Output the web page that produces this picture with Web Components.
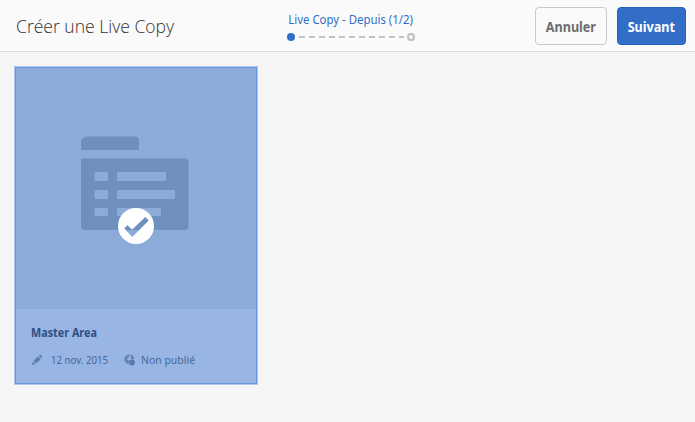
<!DOCTYPE html>
<html lang="fr">
<head>
<meta charset="utf-8">
<title>Créer une Live Copy</title>
<style>
html, body { margin: 0; height: 100%; overflow: hidden; }
body { background: #f5f5f5; font-family: "Open Sans", "Noto Sans", sans-serif; }
</style>
</head>
<body>
<wizard-page></wizard-page>
<script>
const define = (name, html) => customElements.define(name, class extends HTMLElement {
  constructor() {
    super();
    this.attachShadow({ mode: 'open' }).innerHTML = html;
  }
});

define('fit-text', `<style>
:host { display: block; width: max-content; white-space: nowrap; transform: scaleX(var(--stretch, 1)); transform-origin: var(--origin, 0) 50%; }
</style><slot></slot>`);

define('wizard-button', `<style>
:host { display: block; }
button { box-sizing: border-box; display: flex; justify-content: center; width: 100%; height: 38px; padding: 0; border: 1px solid var(--edge, #c9c9c9); border-radius: 4px;
  background: var(--fill, #fafafa); color: var(--ink, #6d6d6d); font: 700 14px/37px "Noto Sans", sans-serif; }
fit-text { --stretch: .9; --origin: 50%; }
</style><button><fit-text><slot></slot></fit-text></button>`);

define('wizard-steps', `<style>
:host { display: flex; flex-direction: column; align-items: center; color: #326ec8; font: 12px/16px "Noto Sans", sans-serif; }
fit-text { --stretch: .95; --origin: 50%; }
svg { display: block; margin-top: 4px; }
</style><fit-text><slot></slot></fit-text>
<svg width="128" height="10" viewBox="0 0 128 10">
<path d="M12 5H117" stroke="#c2c2c2" stroke-width="2" stroke-dasharray="6 4"/>
<circle cx="4" cy="5" r="4" fill="#326ec8"/>
<circle cx="124" cy="5" r="3" fill="#fafafa" stroke="#bebebe" stroke-width="2"/>
</svg>`);

define('wizard-bar', `<style>
:host { box-sizing: border-box; display: grid; grid-template-columns: 287px 128px 1fr; height: 52px; background: #fafafa; border-bottom: 1px solid #dadada; }
h1 { margin: 0; padding-left: 15.500px; font: 300 19px/53px "Open Sans", sans-serif; color: #323232; }
h1 fit-text { --stretch: .923; }
wizard-steps { padding-top: 12px; }
.actions { display: flex; justify-content: flex-end; gap: 10px; padding: 7px 9px 0 0; }
.cancel { width: 72px; }
.next { width: 69px; --fill: #326ec8; --edge: #2462bd; --ink: #fff; }
</style>
<h1><fit-text>Créer une Live Copy</fit-text></h1>
<wizard-steps>Live Copy - Depuis (1/2)</wizard-steps>
<div class="actions"><wizard-button class="cancel">Annuler</wizard-button><wizard-button class="next">Suivant</wizard-button></div>`);

define('folder-art', `<style>:host, svg { display: block; }</style>
<svg width="240" height="241" viewBox="16 68 240 241">
<path fill="#6f8fbd" fill-rule="evenodd" d="M81 150V140L85 136.500H135Q139 136.500 139 140.500V150ZM81 158.500H184.500Q188.500 158.500 188.500 162.500V226Q188.500 230 184.500 230H85Q81 230 81 226ZM95.500 172H107Q108 172 108 173V180Q108 181 107 181H95.500Q94.500 181 94.500 180V173Q94.500 172 95.500 172ZM118 172H165Q166 172 166 173V180Q166 181 165 181H118Q117 181 117 180V173Q117 172 118 172ZM95.500 190H107Q108 190 108 191V198Q108 199 107 199H95.500Q94.500 199 94.500 198V191Q94.500 190 95.500 190ZM118 190H174Q175 190 175 191V198Q175 199 174 199H118Q117 199 117 198V191Q117 190 118 190ZM95.500 208H107Q108 208 108 209V215Q108 216 107 216H95.500Q94.500 216 94.500 215V209Q94.500 208 95.500 208ZM118 208H160Q161 208 161 209V215Q161 216 160 216H118Q117 216 117 215V209Q117 208 118 208Z"/>
<path fill="#fff" fill-rule="evenodd" d="M118 226a18 18 0 1 0 36 0a18 18 0 1 0-36 0ZM124.300 228.500L127.300 225.300L132.200 229.500L145.300 217L148.700 220.500L132.300 237Z"/>
</svg>`);

define('site-card', `<style>
:host { box-sizing: border-box; display: block; width: 242px; height: 317px; border: 1px solid #6493e0; background: #98b5e4; box-shadow: 0 0 0 1px #acc9f6; }
.info { padding: 16px 15px 0; }
.name { font: 700 11.500px/16px "Noto Sans", sans-serif; color: #304f82; --stretch: .94; }
folder-art { background: #8dabd9; }
.meta { display: flex; align-items: center; margin-top: 11px; color: #496896; font: 11px/16px "Noto Sans", sans-serif; white-space: nowrap; }
.pen { margin: 0 9px 0 1px; }
.globe { margin: 0 6px 0 15px; }
.date { width: 58px; --stretch: .88; }
.status { --stretch: .95; }
</style>
<folder-art></folder-art>
<div class="info"><fit-text class="name"><slot></slot></fit-text>
<div class="meta">
<svg class="pen" width="10" height="12" viewBox="0 0 10 12" fill="#5f7eae"><path d="M0 11L1 7.500L3.500 10ZM1.600 6.800L6 2.400L8.700 5.100L4.300 9.500ZM6.700 1.700L7.600.8Q8.200.3 8.900.9L9.900 2Q10.400 2.600 9.800 3.300L9.200 4.200Z"/></svg>
<div class="date"><fit-text><slot name="date"></slot></fit-text></div>
<svg class="globe" width="11" height="12" viewBox="0 0 11 12"><path fill="#6484b5" d="M3.700.8L5.300.3L5.800 1.500L4.500 2.300L5.200 3.300L3.700 4.300L3 5.500L4.700 6L5.300 7.500L4.500 9L4.600 10.500Q1.300 9.500.3 6.300Q-.2 2.700 3.700.8ZM6.500.3Q9.800 1.200 10.400 4.500L9.300 5.400L7.500 5L6.300 4L7.300 3L6.200 1.800Z"/><circle cx="8" cy="8.500" r="2.900" fill="#5877aa"/></svg>
<fit-text class="status"><slot name="status"></slot></fit-text>
</div></div>`);

define('wizard-page', `<style>
:host { display: flex; flex-direction: column; height: 100vh; }
main { flex: 1; padding: 15px; }
</style>
<wizard-bar></wizard-bar>
<main><site-card>Master Area<span slot="date">12 nov. 2015</span><span slot="status">Non publié</span></site-card></main>`);
</script>
</body>
</html>
